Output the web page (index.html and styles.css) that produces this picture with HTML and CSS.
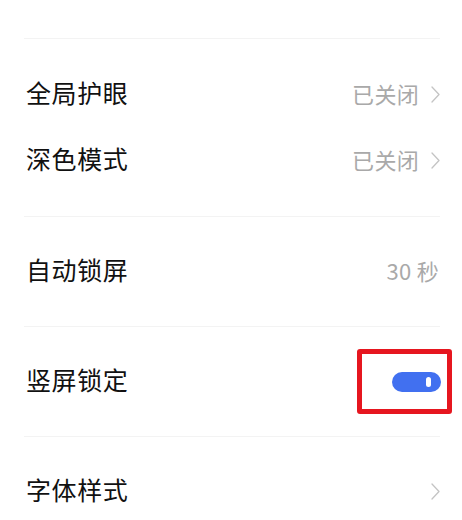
FILE: index.html
```html
<!DOCTYPE html>
<html lang="zh-CN">
<head>
  <meta charset="UTF-8">
  <meta name="viewport" content="width=device-width, initial-scale=1.0">
  <title>显示设置</title>
  <link rel="stylesheet" href="styles.css">
</head>
<body>
  <div class="top"></div>

  <div class="divider"></div>
  <section class="group group-first">
    <div class="row">
      <span class="label">全局护眼</span>
      <span class="value">已关闭
        <svg class="chevron" width="9" height="17" viewBox="0 0 9 17"><polyline points="1,1 8,8.5 1,16" /></svg>
      </span>
    </div>
    <div class="row">
      <span class="label">深色模式</span>
      <span class="value">已关闭
        <svg class="chevron" width="9" height="17" viewBox="0 0 9 17"><polyline points="1,1 8,8.5 1,16" /></svg>
      </span>
    </div>
  </section>

  <div class="divider"></div>
  <section class="group">
    <div class="row">
      <span class="label">自动锁屏</span>
      <span class="value value-plain">30 秒</span>
    </div>
  </section>

  <div class="divider"></div>
  <section class="group">
    <div class="row">
      <span class="label">竖屏锁定</span>
      <span class="switch-wrap">
        <span class="switch on"><span class="knob"></span></span>
        <span class="highlight"></span>
      </span>
    </div>
  </section>

  <div class="divider"></div>
  <section class="group">
    <div class="row">
      <span class="label">字体样式</span>
      <span class="value">
        <svg class="chevron" width="9" height="17" viewBox="0 0 9 17"><polyline points="1,1 8,8.5 1,16" /></svg>
      </span>
    </div>
  </section>
</body>
</html>
```

FILE: styles.css
```css
body {
  font-family: "Noto Sans CJK SC", "Noto Sans", sans-serif;
  background-color: #fff;
  margin: 0;
  padding: 0;
  color: #111;
}
.top {
  height: 38px;
}
.divider {
  height: 1px;
  margin: 0 22px 0 24px;
  background-color: #f3f3f3;
}
.group {
  padding: 22px 0 21px;
}
.group-first {
  padding: 23px 0 22px;
}
.row {
  height: 66px;
  display: flex;
  align-items: center;
  justify-content: space-between;
  padding: 0 22px 0 26px;
}
.label {
  font-size: 25px;
  letter-spacing: 0.6px;
  margin-bottom: 6px;
}
.value {
  display: flex;
  align-items: center;
  gap: 12px;
  font-size: 22px;
  color: #a9a9a9;
  letter-spacing: 0.3px;
  margin-bottom: 4px;
}
.value-plain {
  margin-right: 1px;
}
.chevron {
  margin-top: 2px;
}
.chevron polyline {
  fill: none;
  stroke: #c4c4c4;
  stroke-width: 1.3;
  stroke-linecap: round;
  stroke-linejoin: round;
}
.switch-wrap {
  position: relative;
  display: flex;
}
.switch {
  width: 49px;
  height: 20px;
  border-radius: 10px;
  background-color: #ddd;
  position: relative;
  margin-right: -1px;
}
.switch.on {
  background-color: #4170f0;
}
.knob {
  position: absolute;
  left: 34px;
  top: 5px;
  width: 5px;
  height: 10px;
  border-radius: 3px;
  background-color: #fff;
}
.highlight {
  position: absolute;
  left: -35px;
  top: -23px;
  width: 85px;
  height: 55px;
  border: 5px solid #e6161f;
  border-radius: 3px;
}
```
